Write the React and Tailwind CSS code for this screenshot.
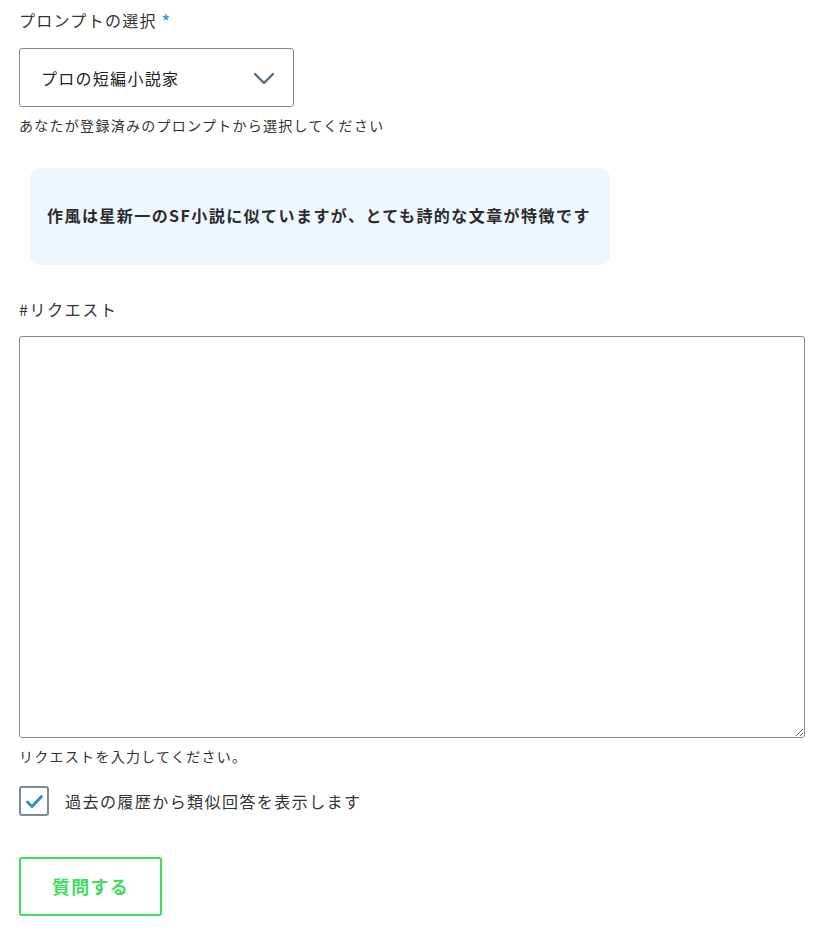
import { useState } from 'react'

const font = { fontFamily: '"Noto Sans CJK JP", "Noto Sans", sans-serif' }

export default function App() {
  const [checked, setChecked] = useState(true)
  return (
    <div className="bg-white text-[#333] px-[19px] pt-[8px] pb-6 w-[827px] tracking-[0.08em]" style={font}>
      <label className="block text-[16px] leading-[24px] text-[#333]">
        プロンプトの選択 <span className="text-[#3b9ce6] font-bold">*</span>
      </label>
      <div className="mt-[16px] w-[275px] h-[59px] border border-[#7d8a97] rounded-[3px] flex items-center justify-between pl-[21px] pr-[18px]">
        <span className="text-[16px] text-[#222]">プロの短編小説家</span>
        <svg width="22" height="14" viewBox="0 0 22 14" fill="none">
          <path d="M2 3l9 9 9-9" stroke="#5d6b78" strokeWidth="2.4" strokeLinecap="round" strokeLinejoin="round" />
        </svg>
      </div>
      <p className="mt-[8px] text-[14px] leading-[20px] text-[#333]">あなたが登録済みのプロンプトから選択してください</p>

      <div className="mt-[33px] ml-[11px] w-[580px] h-[97px] bg-[#eef6fe] rounded-[10px] flex items-center pl-[17px] pb-[4px]">
        <p className="text-[16px] font-bold text-[#2b2b2b] tracking-[0.09em] whitespace-nowrap">作風は星新一のSF小説に似ていますが、とても詩的な文章が特徴です</p>
      </div>

      <label className="block mt-[32px] text-[16px] leading-[24px] text-[#333] tracking-[0.1em]">#リクエスト</label>
      <textarea className="mt-[15px] block w-[786px] h-[402px] border border-[#7d8a97] rounded-[3px] outline-none p-2" />
      <p className="mt-[8px] text-[14px] leading-[20px] text-[#333]">リクエストを入力してください。</p>

      <label className="mt-[20px] flex items-center gap-[16px] cursor-pointer" onClick={() => setChecked(!checked)}>
        <span className="w-[30px] h-[30px] border-2 border-[#7d8a97] rounded-[3px] flex items-center justify-center">
          {checked && (
            <svg width="19" height="15" viewBox="0 0 19 15" fill="none">
              <path d="M2.5 8l4.5 4.5L16.5 2.5" stroke="#2d8fde" strokeWidth="3" strokeLinecap="round" strokeLinejoin="round" />
            </svg>
          )}
        </span>
        <span className="text-[16px] text-[#333] tracking-[0.09em]">過去の履歴から類似回答を表示します</span>
      </label>

      <button className="mt-[41px] w-[143px] h-[59px] border-2 border-[#3ddc5f] rounded-[3px] text-[#3ddc5f] font-bold text-[18px]">
        質問する
      </button>
    </div>
  )
}
